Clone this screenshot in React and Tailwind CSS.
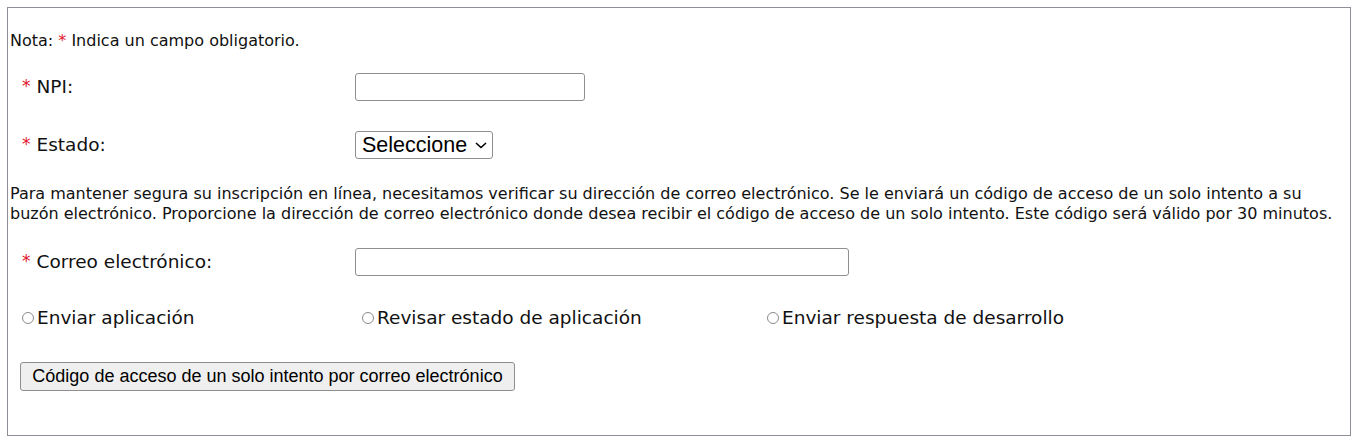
import React from "react";

const T = { fontFamily: '"DejaVu Sans", Verdana, sans-serif' };
const A = { fontFamily: '"Liberation Sans", Arial, sans-serif' };

function Star() {
  return <span className="text-[#e0182d] mr-[6px] text-[17px]">*</span>;
}

function Radio({ label, w }) {
  return (
    <div className={`flex items-center ${w}`}>
      <span className="w-[12px] h-[12px] rounded-full border border-[#8a8a8a] mr-[3px]" />
      <span>{label}</span>
    </div>
  );
}

export default function App() {
  return (
    <div className="w-[1360px] h-[446px] bg-white pt-[7px] pl-[7px]" style={T}>
      <div className="w-[1344px] h-[429px] border border-[#8c9096] text-[#111]">
        <div className="mt-[23px] pl-[2px] h-[20px] flex items-center text-[16px] whitespace-nowrap">
          Nota:&nbsp;<span className="text-[#e0182d]">*</span>&nbsp;Indica un campo obligatorio.
        </div>
        <div className="mt-[22px] h-[28px] flex items-center pl-[14px] text-[18.5px]">
          <div className="w-[333px] flex items-center"><Star />NPI:</div>
          <div className="w-[230px] h-[28px] border border-[#8f8f8f] rounded-[3px] bg-white" />
        </div>
        <div className="mt-[30px] h-[28px] flex items-center pl-[14px] text-[18.5px]">
          <div className="w-[333px] flex items-center"><Star />Estado:</div>
          <div className="w-[138px] h-[28px] border border-[#8f8f8f] rounded-[3px] bg-white flex items-center pl-[6px] text-[21.5px] text-black" style={A}>
            <span>Seleccione</span>
            <svg width="12" height="7" viewBox="0 0 12 7" className="ml-[8px]">
              <path d="M1 1l5 4.5L11 1" fill="none" stroke="#000" strokeWidth="1.6" />
            </svg>
          </div>
        </div>
        <p className="mt-[25px] pl-[2px] text-[16px] leading-[20px] whitespace-nowrap">
          Para mantener segura su inscripción en línea, necesitamos verificar su dirección de correo electrónico. Se le enviará un código de acceso de un solo intento a su
          <br />
          buzón electrónico. Proporcione la dirección de correo electrónico donde desea recibir el código de acceso de un solo intento. Este código será válido por 30 minutos.
        </p>
        <div className="mt-[24px] h-[28px] flex items-center pl-[14px] text-[18.5px]">
          <div className="w-[333px] flex items-center"><Star />Correo electrónico:</div>
          <div className="w-[494px] h-[28px] border border-[#8f8f8f] rounded-[3px] bg-white" />
        </div>
        <div className="mt-[30px] h-[24px] flex items-center pl-[14px] text-[18.5px]">
          <Radio label="Enviar aplicación" w="w-[340px]" />
          <Radio label="Revisar estado de aplicación" w="w-[405px]" />
          <Radio label="Enviar respuesta de desarrollo" w="w-[320px]" />
        </div>
        <div className="mt-[32px] pl-[12px] flex">
          <div className="w-[495px] h-[29px] border border-[#8f8f8f] rounded-[3px] bg-[#efefef] flex items-center justify-center text-[18px] text-black whitespace-nowrap" style={A}>
            Código de acceso de un solo intento por correo electrónico
          </div>
        </div>
      </div>
    </div>
  );
}
